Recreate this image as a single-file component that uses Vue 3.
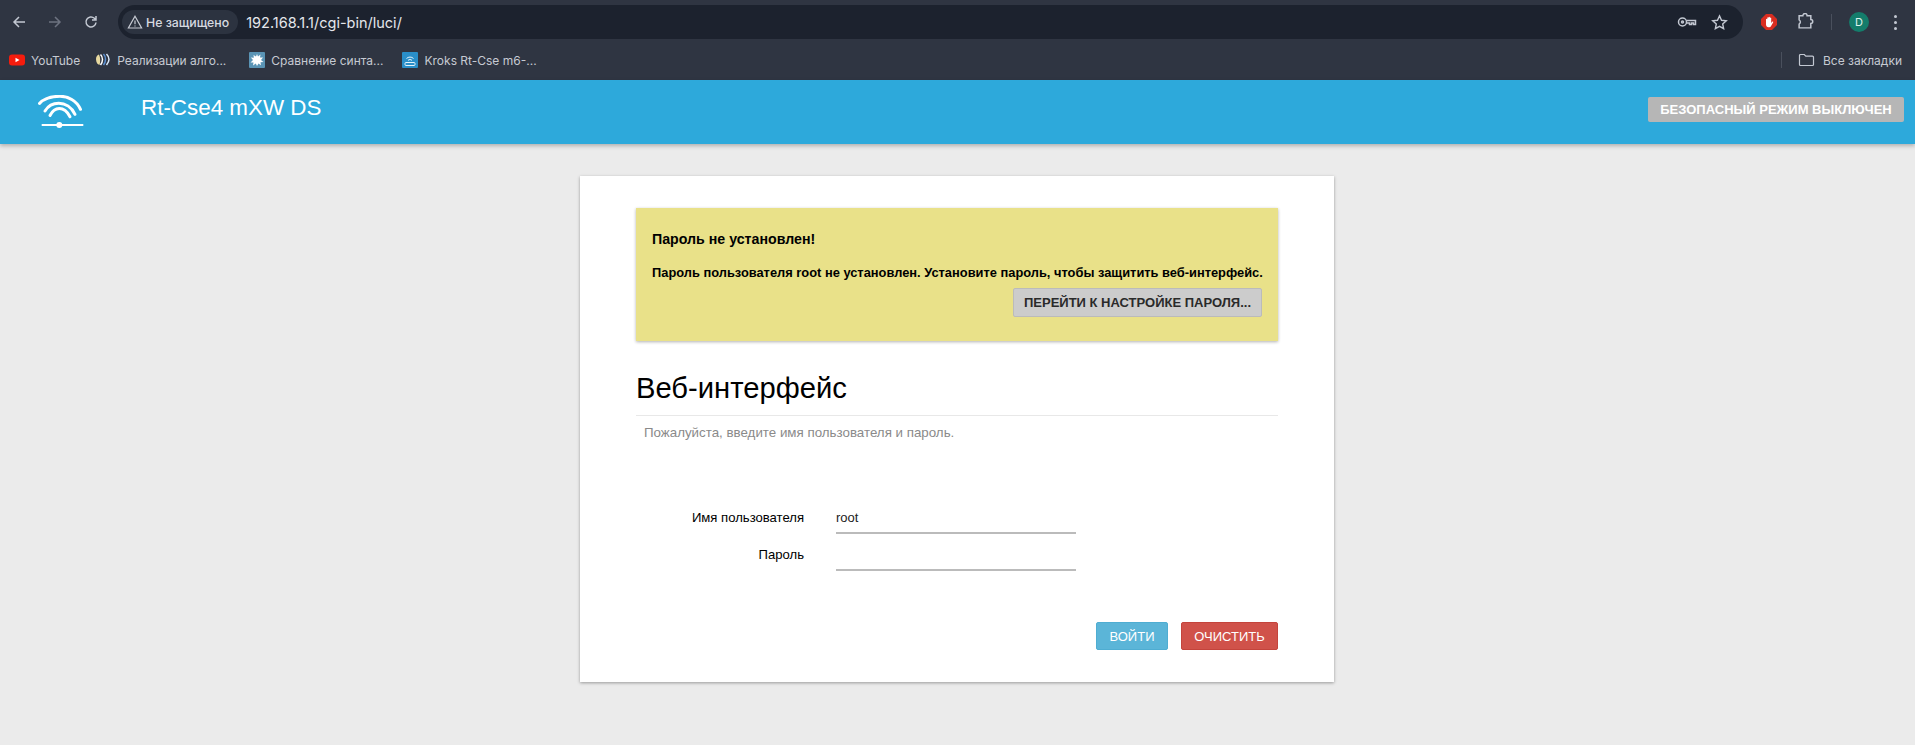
<script setup>
const bookmarks = [
  { id: 'yt', label: 'YouTube' },
  { id: 'algo', label: 'Реализации алго...' },
  { id: 'syntax', label: 'Сравнение синта...' },
  { id: 'kroks', label: 'Kroks Rt-Cse m6-...' }
]
</script>

<template>
  <div class="page">
    <div class="browser">
      <div class="toolbar">
        <svg class="nav-icon" viewBox="0 0 16 16"><path d="M14 8H3M8 3 3 8l5 5" /></svg>
        <svg class="nav-icon dim" viewBox="0 0 16 16"><path d="M2 8h11M8 3l5 5-5 5" /></svg>
        <svg class="nav-icon" viewBox="0 0 16 16"><path d="M13 8.500A5 5 0 1 1 11.400 4.300L13 6M13 2v4H9" /></svg>
        <div class="omnibox">
          <div class="chip">
            <svg class="warn" viewBox="0 0 16 16"><path d="M8 2.200 14.600 14H1.400Z" /><path d="M8 6.500v3.800M8 11.400v1.100" /></svg>
            <span>Не защищено</span>
          </div>
          <span class="url">192.168.1.1/cgi-bin/luci/</span>
          <svg class="key" viewBox="0 0 20 12">
            <circle cx="5.500" cy="6" r="4" />
            <circle cx="5.500" cy="6" r="1" />
            <path d="M9.500 4.500h9v4h-2v-1.500h-2v1.500h-2v-1.500h-3" />
          </svg>
          <svg class="star" viewBox="0 0 16 16"><path d="m8 1.800 1.900 4.100 4.500.5-3.400 3 .9 4.400L8 11.600 4.100 13.800 5 9.400l-3.400-3 4.500-.5Z" /></svg>
        </div>
        <svg class="stop" viewBox="0 0 16 16">
          <path d="M5 0h6l5 5v6l-5 5H5l-5-5V5Z" fill="#d92d20" />
          <path d="M5 8V5.200a.7.7 0 0 1 1.300 0V7 3.700a.7.7 0 0 1 1.300 0V7 3.300a.7.7 0 0 1 1.300 0V7 4a.7.7 0 0 1 1.300 0v5l1-1.200c.6-.6 1.300 0 .9.600L9.800 12.500c-.4.500-.9.700-1.500.7H7.500C6 13.200 5 12 5 10.500Z" fill="#fff" />
        </svg>
        <svg class="puzzle" viewBox="0 0 16 16"><path d="M2 2.500h3.500a2 2 0 0 1 4 0H13v3.700a1.800 1.800 0 0 1 0 3.600V14H2v-3.500a2.300 2.300 0 0 0 0-4Z" /></svg>
        <div class="divider"></div>
        <div class="avatar">D</div>
        <div class="dots"><i></i><i></i><i></i></div>
      </div>

      <div class="bookmarks">
        <div v-for="b in bookmarks" :key="b.id" class="bookmark" :class="'bm-' + b.id">
          <svg v-if="b.id === 'yt'" class="fav" viewBox="0 0 16 16">
            <rect y="2.500" width="16" height="11" rx="3" fill="#f61c0d" />
            <path d="m6.500 5.800 4 2.200-4 2.200Z" fill="#fff" />
          </svg>
          <svg v-else-if="b.id === 'algo'" class="fav" viewBox="0 0 16 16">
            <path d="M1 7c0-2.500 1.500-4 3-4.500 1.500 3 1.500 7.500.5 10.500C2.500 12.500 1 10.500 1 7Z" fill="#e8d9a0" />
            <path d="M5.500 2.500c1.500 1.500 2 3.500 2 5s-.5 3.500-2 5.500" fill="none" stroke="#fff" stroke-width="1.500" />
            <path d="M8.500 2c1.500 1.500 2 3.500 2 5.500s-.5 3.500-2 5.500" fill="none" stroke="#5b8fd0" stroke-width="1.500" />
            <path d="M11.500 2c1.500 1.500 2.500 3.500 2.500 5.500s-1 3.500-2.500 5.500" fill="none" stroke="#dbe8f7" stroke-width="1.500" />
          </svg>
          <svg v-else-if="b.id === 'syntax'" class="fav" viewBox="0 0 16 16">
            <rect width="16" height="16" rx="1" fill="#5a94b5" />
            <path d="M8 2l1 2.500L11.500 2.500l-.5 3L14 5.500l-2 2.500 2.500 2-3 .2.500 3L9.500 11.500 8 14l-1.200-2.500L4 13.500l.5-3-3 0L4 8 1.800 5.500l3 .2L4.500 3 7 4.500Z" fill="#fff" />
          </svg>
          <svg v-else class="fav" viewBox="0 0 16 16">
            <rect width="16" height="16" rx="1" fill="#2a8fc9" />
            <path d="M4.500 6.500a5 5 0 0 1 7 0M6 8.300a3 3 0 0 1 4 0" fill="none" stroke="#e4f3fb" stroke-width="1" />
            <rect x="3" y="10.500" width="10" height="3" rx="1" fill="none" stroke="#e4f3fb" stroke-width="1" />
          </svg>
          <span>{{ b.label }}</span>
        </div>
        <div class="all-bookmarks">
          <div class="bm-divider"></div>
          <svg class="folder" viewBox="0 0 16 14"><path d="M1 2.500a1 1 0 0 1 1-1h3.800l1.500 1.700H14a1 1 0 0 1 1 1v7.300a1 1 0 0 1-1 1H2a1 1 0 0 1-1-1Z" /></svg>
          <span>Все закладки</span>
        </div>
      </div>
    </div>

    <header class="header">
      <svg class="logo" viewBox="0 0 46 34">
        <path d="M1.500 8.500C6 3.500 14 1.300 22 1.300c8 0 16.500 4 20.500 13" />
        <path d="M7 16C10 11 15 8.300 20.800 8.300 27 8.300 33.500 12 37 19.300" />
        <path d="M12 20.500c2.300-4.500 5.500-7 9.300-7 4.500 0 8 3 10.700 8.200" />
        <path class="bar" d="M3.700 30h41.600" />
        <circle cx="21.300" cy="30" r="3" />
      </svg>
      <a class="brand">Rt-Cse4 mXW DS</a>
      <span class="badge">Безопасный режим выключен</span>
    </header>

    <main class="main">
      <div class="card">
        <div class="alert">
          <h4>Пароль не установлен!</h4>
          <p>Пароль пользователя root не установлен. Установите пароль, чтобы защитить веб-интерфейс.</p>
          <div class="alert-actions">
            <button class="btn-settings" type="button">Перейти к настройке пароля...</button>
          </div>
        </div>

        <h2>Веб-интерфейс</h2>
        <p class="descr">Пожалуйста, введите имя пользователя и пароль.</p>

        <form class="login" @submit.prevent>
          <label class="row">
            <span>Имя пользователя</span>
            <input type="text" value="root">
          </label>
          <label class="row">
            <span>Пароль</span>
            <input type="password">
          </label>
        </form>

        <div class="actions">
          <button class="btn btn-login" type="button">Войти</button>
          <button class="btn btn-reset" type="button">Очистить</button>
        </div>
      </div>
    </main>
  </div>
</template>

<style>
html,
body {
  margin: 0;
  background: #ebebeb;
}
</style>

<style scoped>
* {
  box-sizing: border-box;
}

.page {
  min-height: 745px;
  background: #ebebeb;
  font-family: "Liberation Sans", Arial, sans-serif;
  color: #000;
}

.browser {
  height: 80px;
  background: #2f3542;
  font-family: Inter, "Noto Sans", sans-serif;
}

.toolbar {
  height: 40px;
  padding-top: 5px;
  display: flex;
  align-items: flex-start;
}

.nav-icon {
  width: 16px;
  height: 16px;
  margin: 9px 20px 0 0;
  fill: none;
  stroke: #c3c8d2;
  stroke-width: 1.500;
  flex: none;
}

.nav-icon:first-child {
  margin-left: 11px;
}

.nav-icon.dim {
  stroke: #6d7380;
}

.nav-icon:nth-child(3) {
  margin-right: 19px;
}

.omnibox {
  width: 1625px;
  height: 34px;
  border-radius: 17px;
  background: #1c222e;
  display: flex;
  align-items: center;
  padding: 0 15px 0 4px;
  flex: none;
}

.chip {
  height: 24px;
  border-radius: 12px;
  background: #2c3340;
  display: flex;
  align-items: center;
  gap: 3px;
  padding: 0 9px 0 5px;
  color: #d7dae0;
  font-size: 12.300px;
  font-weight: 500;
}

.warn {
  width: 16px;
  height: 16px;
  fill: none;
  stroke: #c8ccd4;
  stroke-width: 1.200;
}

.url {
  margin-left: 8px;
  color: #e4e7ec;
  font-size: 14.500px;
}

.key {
  margin-left: auto;
  width: 20px;
  height: 12px;
  fill: none;
  stroke: #c3c8d2;
  stroke-width: 1.500;
}

.star {
  margin-left: 14px;
  width: 17px;
  height: 17px;
  fill: none;
  stroke: #c3c8d2;
  stroke-width: 1.300;
}

.stop {
  width: 16px;
  height: 16px;
  margin: 9px 0 0 18px;
  flex: none;
}

.puzzle {
  width: 17px;
  height: 17px;
  margin: 8px 0 0 20px;
  fill: none;
  stroke: #c3c8d2;
  stroke-width: 1.400;
  flex: none;
}

.divider {
  width: 1px;
  height: 16px;
  margin: 9px 0 0 17px;
  background: #4a505d;
  flex: none;
}

.avatar {
  width: 20px;
  height: 20px;
  margin: 7px 0 0 17px;
  border-radius: 50%;
  background: #147d6b;
  color: #dff3ee;
  font-size: 11px;
  line-height: 20px;
  text-align: center;
  flex: none;
}

.dots {
  margin: 10px 0 0 25px;
  display: flex;
  flex-direction: column;
  gap: 3px;
}

.dots i {
  width: 3px;
  height: 3px;
  border-radius: 50%;
  background: #c3c8d2;
}

.bookmarks {
  height: 40px;
  display: flex;
  align-items: center;
  padding: 0 13px 0 9px;
  color: #c6cad2;
  font-size: 12px;
}

.bookmark {
  display: flex;
  align-items: center;
  gap: 6px;
  white-space: nowrap;
}

.fav {
  width: 16px;
  height: 16px;
  flex: none;
}

.bm-algo {
  margin-left: 15px;
}

.bm-syntax {
  margin-left: 23px;
}

.bm-kroks {
  margin-left: 19px;
}

.all-bookmarks {
  margin-left: auto;
  display: flex;
  align-items: center;
  white-space: nowrap;
}

.bm-divider {
  width: 1px;
  height: 16px;
  background: #4a505d;
  margin-right: 16px;
}

.folder {
  width: 17px;
  height: 14px;
  margin-right: 8px;
  fill: none;
  stroke: #c3c8d2;
  stroke-width: 1.200;
}

.header {
  height: 64px;
  background: #2da9db;
  box-shadow: 0 2px 4px rgba(0, 0, 0, 0.25);
  display: flex;
  align-items: center;
  padding: 0 11px 0 38px;
  position: relative;
}

.logo {
  width: 46px;
  height: 34px;
  margin-top: -1px;
  fill: #fff;
  flex: none;
}

.logo path {
  fill: none;
  stroke: #fff;
  stroke-width: 3;
  stroke-linecap: round;
}

.logo .bar {
  stroke-width: 2;
  stroke-linecap: butt;
}

.brand {
  margin: -9px 0 0 57px;
  color: #fff;
  font-size: 22.400px;
}

.badge {
  margin: -5px 0 0 auto;
  width: 256px;
  height: 25px;
  line-height: 25px;
  text-align: center;
  background: #b6b6b6;
  border-radius: 2px;
  color: #fff;
  font-size: 13px;
  font-weight: 700;
  text-transform: uppercase;
}

.main {
  padding: 32px 1px 0 0;
  display: flex;
  justify-content: center;
}

.card {
  width: 754px;
  height: 506px;
  background: #fff;
  box-shadow: 0 1px 3px rgba(0, 0, 0, 0.35);
  padding: 32px 56px 0;
}

.alert {
  height: 133px;
  background: #e9e189;
  box-shadow: 0 1px 3px rgba(0, 0, 0, 0.3);
  padding: 21px 16px 0;
  font-weight: 700;
}

.alert h4 {
  margin: 0;
  font-size: 14.200px;
  line-height: 20px;
}

.alert p {
  margin: 14px 0 0;
  font-size: 12.870px;
  line-height: 20px;
  white-space: nowrap;
}

.alert-actions {
  display: flex;
  justify-content: flex-end;
  margin-top: 5px;
}

.btn-settings {
  width: 249px;
  height: 29px;
  padding: 0;
  border: 1px solid #bbb;
  border-radius: 2px;
  background: #ccc;
  color: #2a2a2a;
  font-family: inherit;
  font-size: 13px;
  font-weight: 700;
  text-transform: uppercase;
}

h2 {
  margin: 28px 0 0;
  height: 47px;
  padding-top: 3px;
  border-bottom: 1px solid #e8e8e8;
  font-size: 29.200px;
  font-weight: 400;
  line-height: 32px;
}

.descr {
  margin: 8px 0 0 8px;
  color: #8a8a8a;
  font-size: 13.330px;
  line-height: 18px;
}

.login {
  margin-top: 61px;
  display: flex;
  flex-direction: column;
  gap: 6px;
}

.row {
  display: flex;
  font-size: 13.100px;
}

.row span {
  width: 168px;
  text-align: right;
  line-height: 28px;
  padding-top: 1px;
}

.row input {
  width: 240px;
  height: 31px;
  margin-left: 32px;
  padding: 0;
  border: 0;
  border-bottom: 2px solid #bbb;
  outline: none;
  background: transparent;
  color: #222;
  font-family: inherit;
  font-size: 13px;
}

.actions {
  margin-top: 51px;
  display: flex;
  justify-content: flex-end;
  gap: 13px;
}

.btn {
  height: 28px;
  padding: 0;
  border: 1px solid transparent;
  border-radius: 2px;
  color: #fff;
  font-family: inherit;
  font-size: 13px;
  text-transform: uppercase;
}

.btn-login {
  width: 72px;
  background: #5bb5d8;
  border-color: #4fadd2;
}

.btn-reset {
  width: 97px;
  background: #d0524a;
  border-color: #c4443c;
}
</style>
